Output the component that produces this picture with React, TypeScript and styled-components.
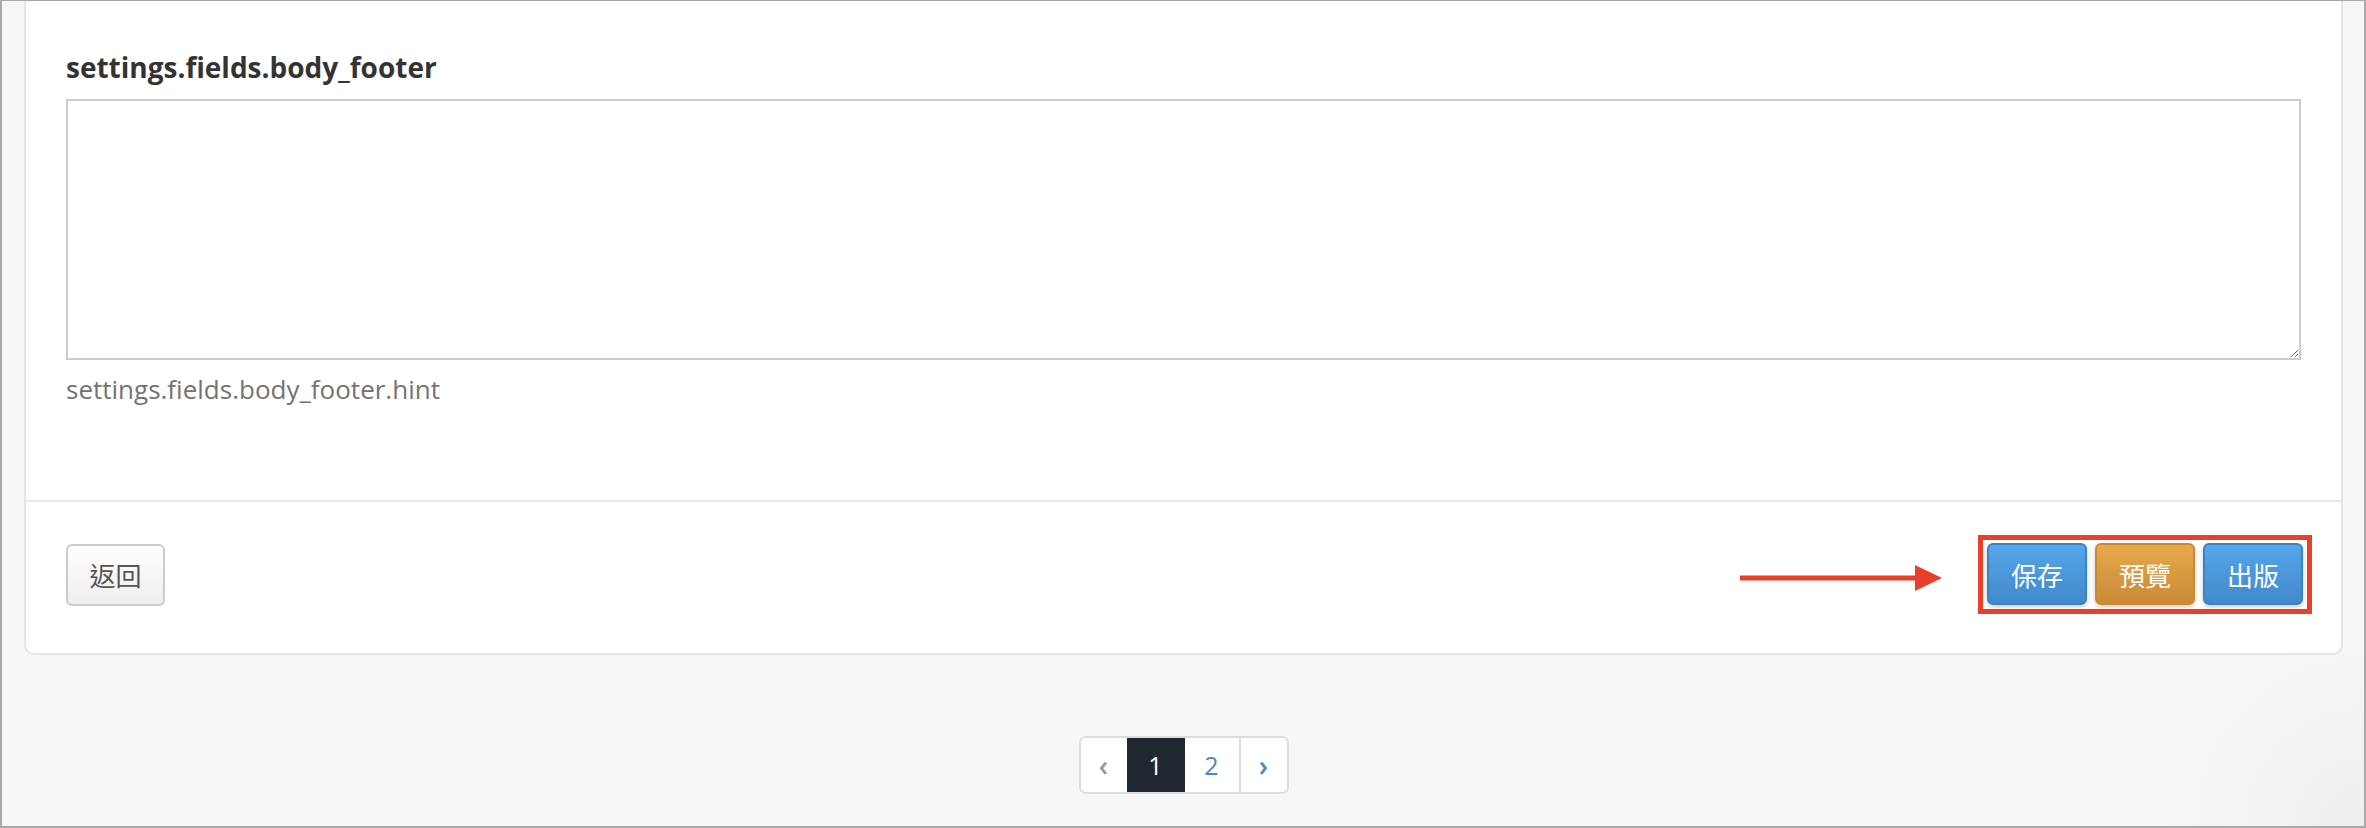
import React from "react";
import styled, { createGlobalStyle } from "styled-components";

const Global = createGlobalStyle`
  html, body { margin: 0; padding: 0; background: #ffffff; }
  * { box-sizing: border-box; }
`;

const Frame = styled.div`
  width: 2366px;
  height: 828px;
  overflow: hidden;
  border-style: solid;
  border-color: #a9a9a9;
  border-width: 1px 2px 2px 2px;
  background: radial-gradient(circle at 100% 100%, #eeeeee 0, #f7f7f7 200px);
  padding: 0 21px 0 22px;
  display: flex;
  flex-direction: column;
  font-family: "Open Sans", "Noto Sans CJK TC", sans-serif;
`;

const Card = styled.section`
  margin-top: -10px;
  background: #ffffff;
  border: 2px solid #e6e6e6;
  border-radius: 0 0 10px 10px;
`;

const Body = styled.div`
  padding: 54px 40px 92px 40px;
`;

const FieldLabel = styled.label`
  display: block;
  font-size: 28px;
  line-height: 40px;
  font-weight: 700;
  color: #333333;
  margin-bottom: 12px;
`;

const TextArea = styled.textarea`
  display: block;
  width: 100%;
  height: 261px;
  border: 2px solid #cccccc;
  background: #ffffff;
  resize: vertical;
  font: inherit;
  outline: none;
`;

const Hint = styled.p`
  margin: 11px 0 0;
  font-size: 26px;
  line-height: 37px;
  color: #737373;
`;

const Footer = styled.div`
  border-top: 2px solid #e8e8e8;
  display: flex;
  align-items: center;
  padding: 33px 29px 39px 40px;
`;

const BackButton = styled.button`
  width: 99px;
  height: 62px;
  border: 2px solid #cccccc;
  border-radius: 6px;
  background: linear-gradient(#ffffff, #eeeeee);
  color: #555555;
  font-family: "Noto Sans CJK TC", sans-serif;
  font-size: 26px;
  padding: 0;
  margin-right: auto;
`;

const Arrow = styled.svg`
  display: block;
  margin: 7px 36px 0 0;
`;

const Highlight = styled.div`
  border: 5px solid #e8402a;
  padding: 3px 4px 4px 4px;
  display: flex;
  gap: 8px;
`;

const ActionButton = styled.button<{ $tone: "blue" | "orange" }>`
  width: 100px;
  height: 62px;
  padding: 0;
  border-radius: 6px;
  border: 2px solid ${(p) => (p.$tone === "blue" ? "#3d82c3" : "#c98a36")};
  background: ${(p) =>
    p.$tone === "blue"
      ? "linear-gradient(#55a6eb, #4189cb)"
      : "linear-gradient(#e7a84d, #cb8a37)"};
  box-shadow: 0 2px 4px rgba(0, 0, 0, 0.2);
  color: #ffffff;
  font-family: "Noto Sans CJK TC", sans-serif;
  font-size: 26px;
`;

const Pager = styled.nav`
  display: flex;
  justify-content: center;
  margin-top: 81px;
`;

const PageList = styled.ul`
  display: flex;
  list-style: none;
  margin: 0;
  padding: 0;
  border: 2px solid #dddddd;
  border-radius: 7px;
  overflow: hidden;
  background: #ffffff;
`;

const PageItem = styled.li<{
  $active?: boolean;
  $muted?: boolean;
  $divider?: boolean;
  $chevron?: boolean;
  $w: number;
}>`
  width: ${(p) => p.$w}px;
  height: 54px;
  display: flex;
  align-items: center;
  justify-content: center;
  font-size: ${(p) => (p.$chevron ? "28px" : "25px")};
  font-weight: ${(p) => (p.$chevron ? 600 : 400)};
  background: ${(p) => (p.$active ? "#212831" : "#ffffff")};
  color: ${(p) => (p.$active ? "#ffffff" : p.$muted ? "#9a9a9a" : "#4a89c8")};
  border-left: ${(p) => (p.$divider ? "2px solid #dddddd" : "0")};
`;

export default function App() {
  return (
    <>
      <Global />
      <Frame>
        <Card>
          <Body>
            <FieldLabel htmlFor="body_footer">settings.fields.body_footer</FieldLabel>
            <TextArea id="body_footer" />
            <Hint>settings.fields.body_footer.hint</Hint>
          </Body>
          <Footer>
            <BackButton>返回</BackButton>
            <Arrow width="202" height="26" viewBox="0 0 202 26">
              <rect x="0" y="10.5" width="178" height="5" fill="#e8402a" />
              <polygon points="175,0 202,13 175,26" fill="#e8402a" />
            </Arrow>
            <Highlight>
              <ActionButton $tone="blue">保存</ActionButton>
              <ActionButton $tone="orange">預覽</ActionButton>
              <ActionButton $tone="blue">出版</ActionButton>
            </Highlight>
          </Footer>
        </Card>
        <Pager>
          <PageList>
            <PageItem $w={46} $muted $chevron>‹</PageItem>
            <PageItem $w={58} $active>1</PageItem>
            <PageItem $w={54}>2</PageItem>
            <PageItem $w={48} $divider $chevron>›</PageItem>
          </PageList>
        </Pager>
      </Frame>
    </>
  );
}
